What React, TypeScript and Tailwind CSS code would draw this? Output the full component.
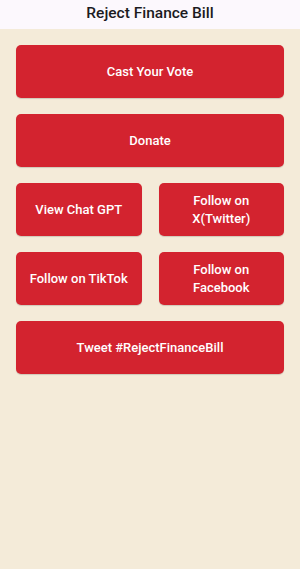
import React from 'react';

const btn =
  'flex items-center justify-center rounded-[5px] bg-[#d3232f] px-2 text-center text-[13px] leading-[18px] font-medium text-white shadow-[0_1px_1px_rgba(0,0,0,0.15)] h-[53px]';

export default function App() {
  return (
    <div className="min-h-[569px] flex flex-col bg-[#f4ebd9] font-['Roboto',sans-serif]">
      <div className="h-[29px] bg-[#fcf8fd] flex items-center justify-center">
        <h1 className="text-[15.5px] font-medium text-[#1b1b1f] leading-none -mt-[2px]">Reject Finance Bill</h1>
      </div>
      <div className="flex flex-col gap-[16px] px-[16px] pt-[16px]">
        <button className={btn}>Cast Your Vote</button>
        <button className={btn}>Donate</button>
        <div className="grid grid-cols-2 gap-x-[17px] gap-y-[16px]">
          <button className={btn}>View Chat GPT</button>
          <button className={btn}>
            Follow on
            <br />
            X(Twitter)
          </button>
          <button className={btn}>Follow on TikTok</button>
          <button className={btn}>
            Follow on
            <br />
            Facebook
          </button>
        </div>
        <button className={btn}>Tweet #RejectFinanceBill</button>
      </div>
    </div>
  );
}
